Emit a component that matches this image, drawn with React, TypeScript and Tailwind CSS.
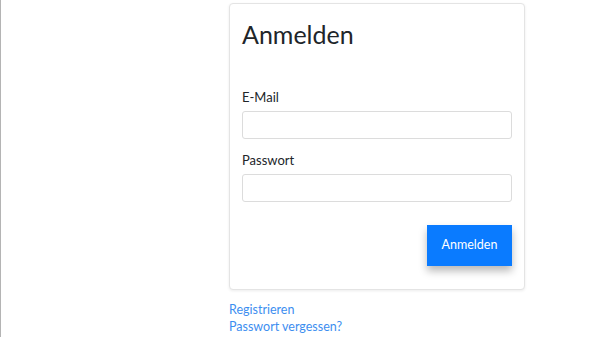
import React from 'react';

const App: React.FC = () => {
  return (
    <div className="w-[600px] h-[337px] bg-white overflow-hidden flex" style={{ fontFamily: 'Lato, "Noto Sans", sans-serif' }}>
      <div className="w-px h-full bg-[#b4b4b4]" />
      <div className="ml-[228px] pt-[3px] flex flex-col">
        <div className="w-[296px] bg-white border border-[#e4e4e4] rounded-[4px] shadow-[0_1px_3px_rgba(0,0,0,0.08)] px-3 pt-[14px] pb-[23px]">
          <h1 className="text-[25px] leading-[32px] text-[#212529] font-normal">Anmelden</h1>
          <div className="mt-[39px]">
            <label className="block text-[13px] leading-[16px] text-[#212529]">E-Mail</label>
            <input className="mt-[6px] block w-full h-[28px] border border-[#dcdcdc] rounded-[3px] outline-none" />
          </div>
          <div className="mt-[13px]">
            <label className="block text-[13px] leading-[16px] text-[#212529]">Passwort</label>
            <input type="password" className="mt-[6px] block w-full h-[28px] border border-[#dcdcdc] rounded-[3px] outline-none" />
          </div>
          <div className="mt-[23px] flex justify-end">
            <button className="w-[85px] h-[41px] bg-[#0a7bff] text-white text-[12.5px] shadow-[0_5px_8px_rgba(0,0,0,0.28)]">Anmelden</button>
          </div>
        </div>
        <div className="mt-[11px] flex flex-col text-[12.5px] leading-[17px] text-[#3d8ef0]">
          <a href="#">Registrieren</a>
          <a href="#">Passwort vergessen?</a>
        </div>
      </div>
    </div>
  );
};

export default App;
